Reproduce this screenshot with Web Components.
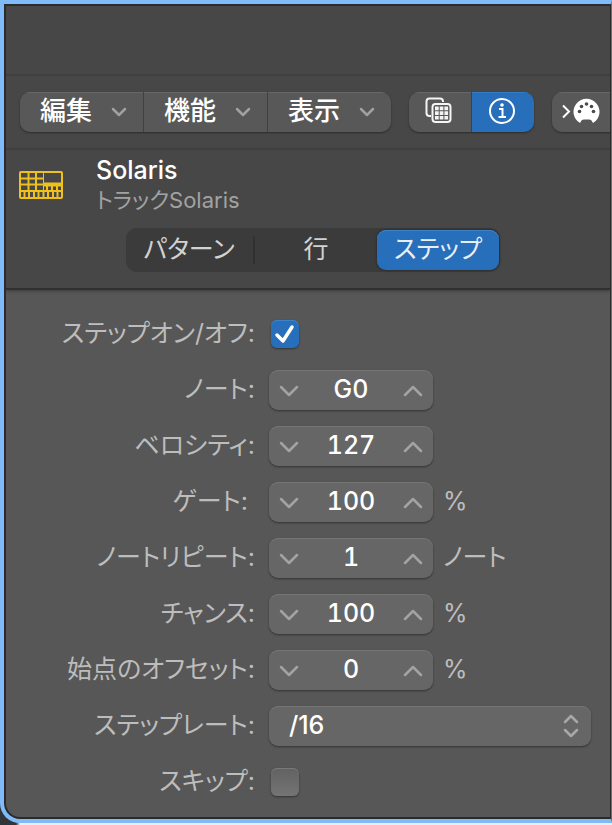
<!DOCTYPE html>
<html lang="ja">
<head>
<meta charset="utf-8">
<meta name="viewport" content="width=device-width, initial-scale=1">
<title>Solaris</title>
<style>
  html, body {
    height: 100%;
    margin: 0;
  }
  body {
    --accent: #276fbb;
    --label-width: 249px;
    background: linear-gradient(to right, #30353a 16px, #eceff2 20px);
    font-family: Inter, "Noto Sans CJK JP", sans-serif;
    font-feature-settings: "palt";
    font-size: 25px;
    color: #bdbdbd;
    overflow: hidden;
  }
</style>
</head>
<body>
<editor-window>
  <tool-bar slot="toolbar">
    <button-group>
      <menu-button>編集</menu-button>
      <menu-button>機能</menu-button>
      <menu-button>表示</menu-button>
    </button-group>
    <button-group>
      <icon-button label="パターンブラウザ">
        <svg width="28" height="28" viewBox="0 0 28 28" fill="none">
          <path d="M6 19H4.500Q1.500 19 1.500 16V4.500Q1.500 1.500 4.500 1.500H15Q18 1.500 18 4.500V5" stroke="#f4f4f4" stroke-width="2"/>
          <rect x="7.500" y="7" width="18" height="18" rx="3" stroke="#f4f4f4" stroke-width="2"/>
          <path d="M10 9.500h3.700v3.700H10zM14.700 9.500h3.700v3.700h-3.700zM19.400 9.500h3.700v3.700h-3.700zM10 14.200h3.700v3.700H10zM14.700 14.200h3.700v3.700h-3.700zM19.400 14.200h3.700v3.700h-3.700zM10 18.900h3.700v3.700H10zM14.700 18.900h3.700v3.700h-3.700zM19.400 18.900h3.700v3.700h-3.700z" fill="#f4f4f4"/>
        </svg>
      </icon-button>
      <icon-button label="情報" active>
        <svg width="28" height="28" viewBox="0 0 28 28" fill="none" stroke="#fff">
          <circle cx="14" cy="14" r="12" stroke-width="2"/>
          <circle cx="14" cy="8" r="1.800" fill="#fff" stroke="none"/>
          <path d="M11 12h3.500v8M10.500 20h7.500" stroke-width="2"/>
        </svg>
      </icon-button>
    </button-group>
    <button-group>
      <icon-button label="MIDI入力" wide>
        <svg width="40" height="28" viewBox="0 0 40 28">
          <path d="M3 8.500l6 6-6 6" fill="none" stroke="#fff" stroke-width="2"/>
          <path d="M20 26A13 13 0 1 1 33 26L31.500 23.500Q30.500 22.500 29 22.500H24Q22.500 22.500 21.500 23.500Z" fill="#fff"/>
          <g fill="#4a4a4a"><circle cx="26.500" cy="7" r="1.800"/><circle cx="21.500" cy="9.500" r="1.800"/><circle cx="31.500" cy="9.500" r="1.800"/><circle cx="19.500" cy="14.500" r="1.800"/><circle cx="33.500" cy="14.500" r="1.800"/></g>
        </svg>
      </icon-button>
    </button-group>
  </tool-bar>

  <track-header slot="header">
    <svg slot="icon" width="44" height="28" viewBox="0 0 44 28" fill="none" stroke="#efc11a">
      <rect x="1" y="1" width="42" height="26" rx="1" stroke-width="2"/>
      <path d="M1 7.500H24M1 13.500H24M1 20H43M9.500 1V20M17 1V20" stroke-width="2"/>
      <path d="M24.500 1V20" stroke-width="1"/>
      <path d="M24 13.500H43" stroke-width="4"/>
      <path d="M28 15v5M33 15v5M38 15v5" stroke-width="2"/>
      <path d="M5.500 20v7M10 20v7M15 20v7M19.500 20v7M24.500 20v7M29 20v7M34 20v7M38.500 20v7" stroke-width="2"/>
    </svg>
    <span slot="title">Solaris</span>
    <span slot="subtitle">トラックSolaris</span>
    <segment-tabs slot="tabs" names="パターン,行,ステップ" selected="2"></segment-tabs>
  </track-header>

  <check-row label="ステップオン/オフ:" checked></check-row>
  <stepper-row label="ノート:" value="G0"></stepper-row>
  <stepper-row label="ベロシティ:" value="127"></stepper-row>
  <stepper-row label="ゲート:&nbsp;" value="100" unit="%"></stepper-row>
  <stepper-row label="ノートリピート:" value="1" unit="ノート"></stepper-row>
  <stepper-row label="チャンス:" value="100" unit="%"></stepper-row>
  <stepper-row label="始点のオフセット:" value="0" unit="%"></stepper-row>
  <select-row label="ステップレート:" options="/16"></select-row>
  <check-row label="スキップ:"></check-row>
</editor-window>

<script>
const BASE = `
  :host, * { box-sizing: border-box; }
  button, input, select {
    appearance: none;
    margin: 0;
    padding: 0;
    border: 0;
    background: none;
    color: inherit;
    font: inherit;
    font-feature-settings: inherit;
  }
  svg { display: block; }
`;

const ROW = `
  :host {
    display: grid;
    grid-template-columns: var(--label-width) minmax(0, 1fr);
    column-gap: 14px;
    align-items: center;
    height: 40px;
  }
  label {
    text-align: right;
    line-height: 36px;
    padding-bottom: 2px;
    white-space: nowrap;
  }
  .field {
    background: #666;
    border-radius: 9px;
    color: #fff;
    box-shadow: inset 0 1px #757575, 0 1px 2px #333;
  }
`;

function render(host, css, html) {
  const root = host.attachShadow({ mode: 'open' });
  root.innerHTML = `<style>${BASE}${css}</style>${html}`;
  return root;
}

function chevron(up) {
  const d = up ? 'M2 11l8-8 8 8' : 'M2 3l8 8 8-8';
  return `<svg width="20" height="14" viewBox="0 0 20 14" fill="none" stroke="#a3a3a3" stroke-width="2.500" stroke-linecap="round" stroke-linejoin="round"><path d="${d}"/></svg>`;
}

class EditorWindow extends HTMLElement {
  connectedCallback() {
    render(this, `
      :host {
        display: block;
        height: 100%;
        padding-bottom: 2px;
      }
      .frame {
        display: flex;
        flex-direction: column;
        height: 100%;
        border: 4px solid #80baf8;
        border-right: 1px solid #707070;
        border-radius: 0 0 0 20px;
        background: #2b2b2b;
        padding: 2px 1px 2px 2px;
      }
      .inner {
        flex: 1;
        display: flex;
        flex-direction: column;
        min-height: 0;
        overflow: hidden;
        border-radius: 0 0 0 14px;
        background: #575757;
      }
      .strip {
        flex: none;
        height: 70px;
        background: #474747;
        border-bottom: 2px solid #3f3f3f;
      }
      main {
        display: flex;
        flex-direction: column;
        gap: 16px;
        padding: 24px 19px 16px 0;
      }
    `, `
      <div class="frame"><div class="inner">
        <div class="strip"></div>
        <slot name="toolbar"></slot>
        <slot name="header"></slot>
        <main><slot></slot></main>
      </div></div>
    `);
  }
}

class ToolBar extends HTMLElement {
  connectedCallback() {
    render(this, `
      :host {
        flex: none;
        display: flex;
        align-items: center;
        gap: 18px;
        height: 74px;
        padding-left: 14px;
        overflow: hidden;
        background: #474747;
        border-bottom: 2px solid #404040;
      }
    `, `<slot></slot>`);
  }
}

class ButtonGroup extends HTMLElement {
  connectedCallback() {
    render(this, `
      :host {
        flex: none;
        display: flex;
        gap: 1px;
        height: 40px;
        overflow: hidden;
        border-radius: 10px;
        background: #414141;
        box-shadow: 0 1px 2px #2c2c2c;
      }
    `, `<slot></slot>`);
  }
}

class MenuButton extends HTMLElement {
  connectedCallback() {
    render(this, `
      :host { display: block; }
      button {
        display: flex;
        align-items: center;
        justify-content: space-between;
        width: 123px;
        height: 40px;
        padding: 0 14px 0 20px;
        background: #585858;
        box-shadow: inset 0 1px #686868;
        color: #fff;
        font-size: 26px;
        font-weight: 500;
      }
      span {
        line-height: 36px;
        padding-bottom: 2px;
      }
    `, `
      <button type="button" aria-haspopup="menu"><span><slot></slot></span>
        <svg width="20" height="14" viewBox="0 0 20 14" fill="none" stroke="#a0a0a0" stroke-width="2.500" stroke-linecap="round" stroke-linejoin="round"><path d="M4 4l6 6 6-6"/></svg>
      </button>
    `);
  }
}

class IconButton extends HTMLElement {
  connectedCallback() {
    render(this, `
      :host { display: block; }
      button {
        display: flex;
        align-items: center;
        justify-content: center;
        width: 62px;
        height: 40px;
        padding: 0 2px 2px 0;
        background: #585858;
        box-shadow: inset 0 1px #686868;
      }
      :host([active]) button {
        background: var(--accent);
        box-shadow: inset 0 1px #347bc5;
      }
      :host([wide]) button {
        justify-content: start;
        width: 96px;
        padding-left: 8px;
      }
    `, `<button type="button" aria-label="${this.getAttribute('label')}"><slot></slot></button>`);
  }
}

class TrackHeader extends HTMLElement {
  connectedCallback() {
    render(this, `
      :host {
        flex: none;
        display: block;
        height: 140px;
        padding-top: 5px;
        background: #474747;
        border-bottom: 2px solid #303030;
        box-shadow: 0 1px 3px #3c3c3c;
      }
      .track {
        display: flex;
        align-items: center;
        gap: 33px;
        padding-left: 13px;
      }
      .title, .subtitle {
        line-height: 30px;
      }
      .title {
        color: #fff;
        font-size: 25px;
        font-weight: 500;
      }
      .subtitle {
        color: #a2a2a2;
        font-size: 22px;
      }
      .tabs {
        display: flex;
        justify-content: center;
        padding: 13px 0 0 10px;
      }
    `, `
      <div class="track">
        <slot name="icon"></slot>
        <div>
          <div class="title"><slot name="title"></slot></div>
          <div class="subtitle"><slot name="subtitle"></slot></div>
        </div>
      </div>
      <div class="tabs"><slot name="tabs"></slot></div>
    `);
  }
}

class SegmentTabs extends HTMLElement {
  connectedCallback() {
    const selected = Number(this.getAttribute('selected'));
    const tabs = this.getAttribute('names').split(',').map((name, i) =>
      `<button type="button" role="tab" aria-selected="${i === selected}"><span>${name}</span></button>`
    ).join('');
    const root = render(this, `
      :host { display: block; }
      div {
        display: flex;
        padding: 2px 1px;
        border-radius: 11px;
        background: #3b3b3b;
      }
      button {
        width: 122px;
        height: 40px;
        border-radius: 9px;
        color: #d2d2d2;
        font-size: 25px;
      }
      span {
        display: block;
        line-height: 36px;
        padding-bottom: 2px;
      }
      button[aria-selected="true"] {
        background: var(--accent);
        box-shadow: 0 0 2px 1px #303030, inset 0 1px #3e82c8;
        color: #e8eef6;
      }
      button:first-child {
        width: 128px;
        padding-right: 4px;
        background: linear-gradient(#303030, #303030) right center / 2px 28px no-repeat;
      }
    `, `<div role="tablist">${tabs}</div>`);
    root.querySelector('div').addEventListener('click', (e) => {
      const tab = e.target.closest('button');
      if (!tab) return;
      root.querySelectorAll('button').forEach((b) => b.setAttribute('aria-selected', b === tab));
    });
  }
}

class StepperRow extends HTMLElement {
  connectedCallback() {
    const value = this.getAttribute('value');
    const root = render(this, `
      ${ROW}
      .control {
        display: flex;
        align-items: center;
        gap: 10px;
      }
      .field {
        display: flex;
        width: 164px;
        height: 40px;
      }
      .field button {
        display: flex;
        flex: none;
        align-items: center;
        justify-content: center;
        width: 40px;
        height: 42px;
      }
      input {
        flex: 1;
        min-width: 0;
        height: 38px;
        text-align: center;
        font-size: 25px;
        font-weight: 500;
        font-feature-settings: "tnum";
      }
      .unit {
        line-height: 36px;
        padding-bottom: 2px;
      }
    `, `
      <label for="value">${this.getAttribute('label')}</label>
      <div class="control">
        <div class="field">
          <button type="button" class="down" aria-label="減らす">${chevron(false)}</button>
          <input id="value" type="text" value="${value}">
          <button type="button" class="up" aria-label="増やす">${chevron(true)}</button>
        </div>
        ${this.hasAttribute('unit') ? `<span class="unit">${this.getAttribute('unit')}</span>` : ''}
      </div>
    `);
    const input = root.querySelector('input');
    const step = (n) => {
      // note names such as G0 are typed in, only numbers are stepped
      if (!isNaN(input.value)) input.value = Number(input.value) + n;
    };
    root.querySelector('.down').addEventListener('click', () => step(-1));
    root.querySelector('.up').addEventListener('click', () => step(1));
  }
}

class CheckRow extends HTMLElement {
  connectedCallback() {
    render(this, `
      ${ROW}
      .box {
        display: grid;
        width: 28px;
        height: 28px;
        margin-left: 2px;
      }
      input, svg { grid-area: 1 / 1; }
      input {
        width: 28px;
        height: 28px;
        border-radius: 6px;
        background: linear-gradient(#626262, #747474);
        box-shadow: inset 0 1px #7a7a7a, 0 1px 2px #333;
      }
      input:checked {
        background: var(--accent);
        box-shadow: inset 0 1px #3e82c8, 0 1px 2px #333;
      }
      svg {
        visibility: hidden;
        pointer-events: none;
      }
      input:checked + svg { visibility: visible; }
    `, `
      <label for="check">${this.getAttribute('label')}</label>
      <div class="box">
        <input id="check" type="checkbox" ${this.hasAttribute('checked') ? 'checked' : ''}>
        <svg width="28" height="28" viewBox="0 0 28 28" fill="none" stroke="#fff" stroke-width="3.500" stroke-linecap="round" stroke-linejoin="round"><path d="M6 15l6 6L21 7"/></svg>
      </div>
    `);
  }
}

class SelectRow extends HTMLElement {
  connectedCallback() {
    const options = this.getAttribute('options').split(',').map((o) => `<option>${o}</option>`).join('');
    render(this, `
      ${ROW}
      .field {
        display: grid;
        align-items: center;
        height: 40px;
      }
      select, svg { grid-area: 1 / 1; }
      select {
        width: 100%;
        height: 40px;
        padding: 0 40px 2px 20px;
        font-size: 25px;
        font-weight: 500;
      }
      svg {
        justify-self: end;
        margin-right: 10px;
        pointer-events: none;
      }
    `, `
      <label for="choice">${this.getAttribute('label')}</label>
      <div class="field">
        <select id="choice">${options}</select>
        <svg width="20" height="28" viewBox="0 0 20 28" fill="none" stroke="#a8a8a8" stroke-width="2.500" stroke-linecap="round" stroke-linejoin="round"><path d="M4 10l6-6 6 6M4 18l6 6 6-6"/></svg>
      </div>
    `);
  }
}

customElements.define('editor-window', EditorWindow);
customElements.define('tool-bar', ToolBar);
customElements.define('button-group', ButtonGroup);
customElements.define('menu-button', MenuButton);
customElements.define('icon-button', IconButton);
customElements.define('track-header', TrackHeader);
customElements.define('segment-tabs', SegmentTabs);
customElements.define('stepper-row', StepperRow);
customElements.define('check-row', CheckRow);
customElements.define('select-row', SelectRow);
</script>
</body>
</html>
